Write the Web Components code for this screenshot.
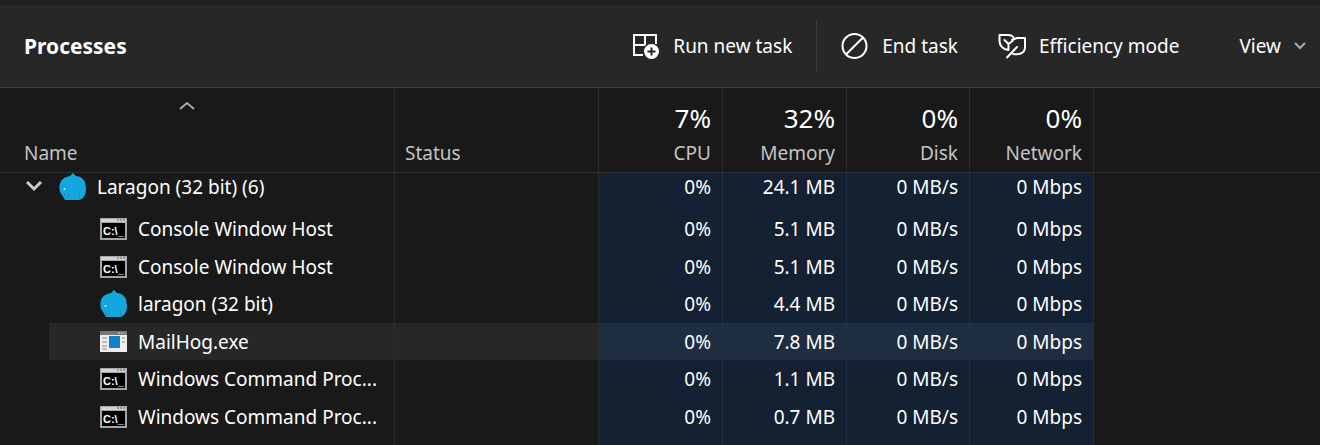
<!DOCTYPE html>
<html lang="en">
<head>
<meta charset="utf-8">
<title>Processes</title>
<style>
  html { background: #191919; }
  body { margin: 0; font-family: "Noto Sans", "Open Sans", sans-serif; font-size: 19px; line-height: 24px; color: #fff; }
</style>
</head>
<body>
<task-window>
  <command-bar slot="bar">
    <h1 slot="title">Processes</h1>
    <command-button icon="run">Run new task</command-button>
    <bar-divider></bar-divider>
    <command-button icon="end">End task</command-button>
    <command-button icon="leaf" spaced>Efficiency mode</command-button>
    <command-button menu>View</command-button>
  </command-bar>
  <process-table></process-table>
</task-window>

<script>
const ICONS = {
  run: `<svg width="28" height="28" viewBox="0 0 28 28" fill="none" stroke="#fff" stroke-width="2"><path d="M11 23H2V3H24V12M2 13H13M13 3V13"/><circle cx="19.500" cy="19.500" r="7.500" fill="#fff" stroke="none"/><path d="M19.500 15.500v8M15.500 19.500h8" stroke="#222"/></svg>`,
  end: `<svg width="28" height="28" viewBox="0 0 28 28" fill="none" stroke="#fff" stroke-width="2"><circle cx="13.500" cy="14" r="12"/><path d="M22 5.500L5 22.500"/></svg>`,
  leaf: `<svg width="28" height="28" viewBox="0 0 28 28" fill="none" stroke="#fff" stroke-width="2" stroke-linejoin="round" stroke-linecap="round"><path d="M10.500 18C5.500 17.500 1.500 14 1.500 9V3H10c3 0 5 1 6 3.500M6.500 8l4 4v5M10.500 12l4-3"/><path d="M27 6H19l-5 2M27 6v9c0 6-5 8-12 7M9 25.500L19 15"/></svg>`,
  laragon: `<svg width="28" height="28" viewBox="0 0 28 28"><path d="M14 0l3 3c4 0 7 2 9 6l1 7c0 4-1 6-3 9l-3 2H6l-3-5-2-3C0 15 0 12 2 8c2-3 5-4 9-5z" fill="#12a7df"/><path d="M5 20l2 6M9 20v6M20 19l1 7" stroke="#1290c2" stroke-width="1"/><circle cx="5.500" cy="16" r="1" fill="#c4f0ff"/></svg>`,
  console: `<svg width="28" height="24" viewBox="0 0 28 24"><path fill="#a5a5a5" d="M0 1h27v22H0z"/><path fill="#d2d2d2" d="M1 2h25v3H1z"/><path d="M17 3h2M20 3h2M23 3h2" stroke="#555"/><path fill="#000" d="M2 6h23v15H2z"/><text x="3" y="18" font-family="Liberation Sans" font-size="11" font-weight="700" fill="#fff">C:\\_</text></svg>`,
  app: `<svg width="28" height="24" viewBox="0 0 28 24"><path fill="#eee" d="M0 1h27v21H0z"/><path fill="#777" d="M0 1h27v4H0z"/><path d="M18 3h2M21 3h2" stroke="#ddd"/><path d="M24 3h2" stroke="#e9a33b"/><path fill="#1681c8" d="M9 6h11v12H9z"/><path d="M2 8h5M2 12h5M2 16h5M2 19h5M22 8h3M22 12h3" stroke="#8c8c8c"/></svg>`,
  down: `<svg width="12" height="8" viewBox="0 0 12 8" fill="none" stroke="#aaa" stroke-width="2"><path d="M1 1l5 5 5-5"/></svg>`,
  expand: `<svg width="16" height="12" viewBox="0 0 16 12" fill="none" stroke="#ccc" stroke-width="3"><path d="M1 1l7 7 7-7"/></svg>`,
  sort: `<svg width="16" height="10" viewBox="0 0 16 10" fill="none" stroke="#aaa" stroke-width="2"><path d="M1 8l7-6 7 6"/></svg>`
};

class BaseElement extends HTMLElement {
  constructor() {
    super();
    this.attachShadow({ mode: "open" });
  }
  connectedCallback() {
    this.shadowRoot.innerHTML = this.render();
  }
}

customElements.define("task-window", class extends BaseElement {
  render() {
    return `<style>
      :host { display: flex; flex-direction: column; min-height: 100vh; background: #191919; }
      .edge { height: 5px; background: #202020; }
      ::slotted(process-table) { flex: 1; }
    </style>
    <div class="edge"></div><slot name="bar"></slot><slot></slot>`;
  }
});

customElements.define("command-bar", class extends BaseElement {
  render() {
    return `<style>
      :host { display: flex; align-items: center; height: 82px; padding: 0 14px 0 24px; background: #272727; border-bottom: 1px solid #3c3c3c; }
      ::slotted(h1) { margin: 0; font-size: 21px; font-weight: 700; line-height: 28px; }
      nav { display: flex; align-items: center; gap: 24px; margin-left: auto; }
    </style>
    <slot name="title"></slot><nav aria-label="Commands"><slot></slot></nav>`;
  }
});

customElements.define("bar-divider", class extends BaseElement {
  render() {
    return `<style>:host { display: block; width: 1px; height: 52px; background: #3c3c3c; }</style>`;
  }
});

customElements.define("command-button", class extends BaseElement {
  render() {
    const icon = this.getAttribute("icon");
    const menu = this.hasAttribute("menu");
    return `<style>
      :host { display: block; }
      :host([spaced]) { margin-left: 16px; }
      :host([menu]) { margin-left: 36px; }
      button { display: flex; align-items: center; gap: 13px; padding: 0; border: 0; background: none; color: inherit; font: inherit; white-space: nowrap; }
      svg { display: block; flex: none; }
    </style>
    <button type="button"${menu ? ' aria-haspopup="menu"' : ""}>${icon ? ICONS[icon] : ""}<slot></slot>${menu ? ICONS.down : ""}</button>`;
  }
});

customElements.define("process-name", class extends BaseElement {
  render() {
    const group = this.hasAttribute("group");
    return `<style>
      :host { display: flex; align-items: center; gap: 10px; height: 100%; margin-left: 49px; padding-left: 51px; white-space: nowrap; }
      :host([group]) { margin-left: 0; padding-left: 26px; }
      svg { display: block; flex: none; }
      button { padding: 0; border: 0; background: none; margin-right: 7px; }
    </style>
    ${group ? `<button type="button" aria-label="Collapse" aria-expanded="true">${ICONS.expand}</button>` : ""}${ICONS[this.getAttribute("icon")]}<span><slot></slot></span>`;
  }
});

const METRICS = [["7%", "CPU"], ["32%", "Memory"], ["0%", "Disk"], ["0%", "Network"]];
const PROCESSES = [
  ["laragon", "Laragon (32 bit) (6)", "24.1 MB", "group"],
  ["console", "Console Window Host", "5.1 MB"],
  ["console", "Console Window Host", "5.1 MB"],
  ["laragon", "laragon (32 bit)", "4.4 MB"],
  ["app", "MailHog.exe", "7.8 MB", "active"],
  ["console", "Windows Command Proc...", "1.1 MB"],
  ["console", "Windows Command Proc...", "0.7 MB"]
];

customElements.define("process-table", class extends BaseElement {
  render() {
    const heads = METRICS.map(([v, l]) => `<th scope="col" class="num"><strong>${v}</strong><span>${l}</span></th>`).join("");
    const rows = PROCESSES.map(([icon, name, mem, kind = ""]) => `<tr class="${kind}">
      <td><process-name icon="${icon}" ${kind}>${name}</process-name></td><td></td>
      <td class="num">0%</td><td class="num">${mem}</td><td class="num">0 MB/s</td><td class="num">0 Mbps</td><td class="rest"></td></tr>`).join("");
    return `<style>
      :host { display: grid; }
      table { width: 100%; table-layout: fixed; border-collapse: separate; border-spacing: 0; }
      .name { width: 395px; } .status { width: 204px; } .metric { width: 124px; } .disk { width: 123px; }
      th, td { box-sizing: border-box; padding: 0; border-right: 1px solid #2c2c2c; font-weight: 400; text-align: left; white-space: nowrap; }
      th { height: 85px; padding: 0 10px 7px; border-bottom: 1px solid #303030; color: #c4c4c4; vertical-align: bottom; }
      th:first-child { padding: 0 20px 7px 0; }
      th button { display: flex; flex-direction: column; gap: 30px; width: 100%; padding: 0 0 0 24px; border: 0; background: none; color: inherit; font: inherit; text-align: left; }
      th svg { display: block; align-self: center; margin-right: 24px; }
      th.num, td.num { padding-right: 11px; text-align: right; }
      strong, th span { display: block; }
      strong { margin-bottom: 5px; font-size: 26px; line-height: 36px; font-weight: 400; color: #fff; }
      tbody td { height: 37px; }
      tbody tr:nth-child(even) td { height: 38px; }
      td.num { background: #132133; border-color: #223044; }
      .group td { padding-bottom: 9px; }
      .active td, .active process-name { background-color: #272727; }
      .active td:first-child { background: none; }
      .active td.num { background: #1f2d40; }
      th:last-child, .rest { border-right: 0; }
      .active td.rest { background: none; }
      tbody tr.fill td { height: auto; }
    </style>
    <table>
      <colgroup><col class="name"><col class="status"><col class="metric"><col class="metric"><col class="disk"><col class="metric"><col></colgroup>
      <thead><tr><th scope="col" aria-sort="ascending"><button type="button">${ICONS.sort}Name</button></th><th scope="col">Status</th>${heads}<th></th></tr></thead>
      <tbody>${rows}<tr class="fill"><td></td><td></td><td class="num"></td><td class="num"></td><td class="num"></td><td class="num"></td><td class="rest"></td></tr></tbody>
    </table>`;
  }
});
</script>
</body>
</html>
